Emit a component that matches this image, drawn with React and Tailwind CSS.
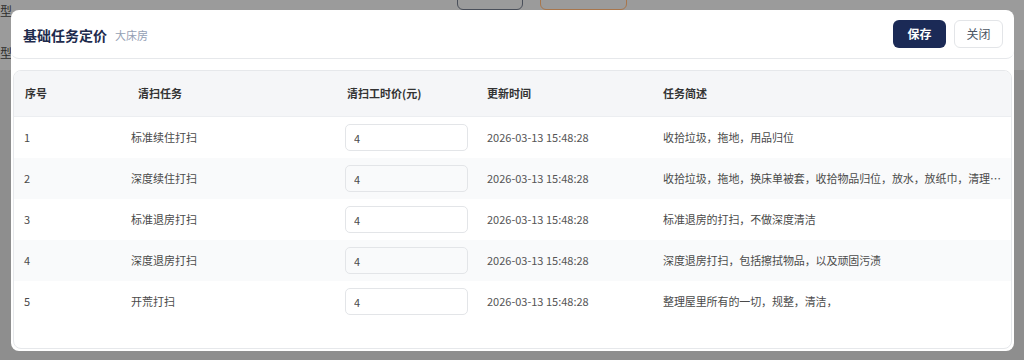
import React from "react";

const ROWS = [
  { id: 1, name: "标准续住打扫", price: "4", time: "2026-03-13 15:48:28", desc: "收拾垃圾，拖地，用品归位" },
  { id: 2, name: "深度续住打扫", price: "4", time: "2026-03-13 15:48:28", desc: "收拾垃圾，拖地，换床单被套，收拾物品归位，放水，放纸巾，清理卫生间，擦拭桌面" },
  { id: 3, name: "标准退房打扫", price: "4", time: "2026-03-13 15:48:28", desc: "标准退房的打扫，不做深度清洁" },
  { id: 4, name: "深度退房打扫", price: "4", time: "2026-03-13 15:48:28", desc: "深度退房打扫，包括擦拭物品，以及顽固污渍" },
  { id: 5, name: "开荒打扫", price: "4", time: "2026-03-13 15:48:28", desc: "整理屋里所有的一切，规整，清洁，" },
];

const COLS = "grid grid-cols-[113px_207px_142px_176px_minmax(0,1fr)]";

export default function App() {
  return (
    <div
      className="relative h-[360px] w-[1024px] overflow-hidden"
      style={{ fontFamily: '"Noto Sans CJK SC", "Noto Sans", sans-serif' }}
    >
      {/* dimmed page behind */}
      <div className="flex h-full flex-col">
        <div className="relative h-[70px] bg-[#9b9b9b]">
          <span className="absolute left-0 top-[2px] text-[12px] text-[#2e2e2e]">型</span>
          <span className="absolute left-0 top-[44px] text-[12px] text-[#2e2e2e]">型</span>
          <div className="absolute left-[457px] top-[-20px] h-[30px] w-[66px] rounded-md border border-[#4a4f5a]" />
          <div className="absolute left-[540px] top-[-20px] h-[30px] w-[87px] rounded-md border border-[#a8764c]" />
        </div>
        <div className="flex-1 bg-[#8e8e8e]" />
      </div>

      {/* modal */}
      <div className="absolute left-[11px] top-[10px] flex h-[341px] w-[1003px] flex-col rounded-lg bg-white">
        <div className="flex h-[49px] items-center justify-between rounded-lg border-b border-[#e6e8eb] pl-3 pr-[11px]">
          <div className="flex items-center gap-[8px] pt-[2px]">
            <h2 className="text-[14px] font-bold leading-none text-[#1e2b4d]">基础任务定价</h2>
            <span className="text-[11px] leading-none text-[#94a0b4]">大床房</span>
          </div>
          <div className="flex items-center gap-2">
            <button className="h-[28px] w-[53px] rounded-md bg-[#1b2a56] text-[12px] font-bold text-white">保存</button>
            <button className="h-[28px] w-[49px] rounded-md border border-[#e3e5e8] bg-white text-[12px] text-[#4b5563]">关闭</button>
          </div>
        </div>

        <div className="mx-[2px] mb-[2px] mt-[11px] flex-1 overflow-hidden rounded-lg border border-[#e6e8eb]">
          <div className={`${COLS} h-[46px] items-center border-b border-[#eceef1] bg-[#f5f6f8] text-[11px] font-bold text-[#333]`}>
            <div className="pl-[11px]">序号</div>
            <div className="pl-[11px]">清扫任务</div>
            <div className="pl-[13px]">清扫工时价(元)</div>
            <div className="pl-[11px]">更新时间</div>
            <div className="pl-[11px]">任务简述</div>
          </div>
          {ROWS.map((r, i) => (
            <div
              key={r.id}
              className={`${COLS} h-[41px] items-center text-[11px] text-[#4a4a4a] ${i % 2 === 1 ? "bg-[#f9fafb]" : "bg-white"}`}
            >
              <div className="pl-[10px]">{r.id}</div>
              <div className="pl-[4px]">{r.name}</div>
              <div className="pl-[11px]">
                <input
                  readOnly
                  value={r.price}
                  className="h-[27px] w-[123px] rounded-[5px] border border-[#e3e5e8] bg-transparent px-2 text-[11px] text-[#4a4a4a] outline-none"
                />
              </div>
              <div className="pl-[11px] text-[#555]">{r.time}</div>
              <div className="truncate pl-[11px] pr-[2px] tracking-[-0.1px]">{r.desc}</div>
            </div>
          ))}
        </div>
      </div>
    </div>
  );
}
